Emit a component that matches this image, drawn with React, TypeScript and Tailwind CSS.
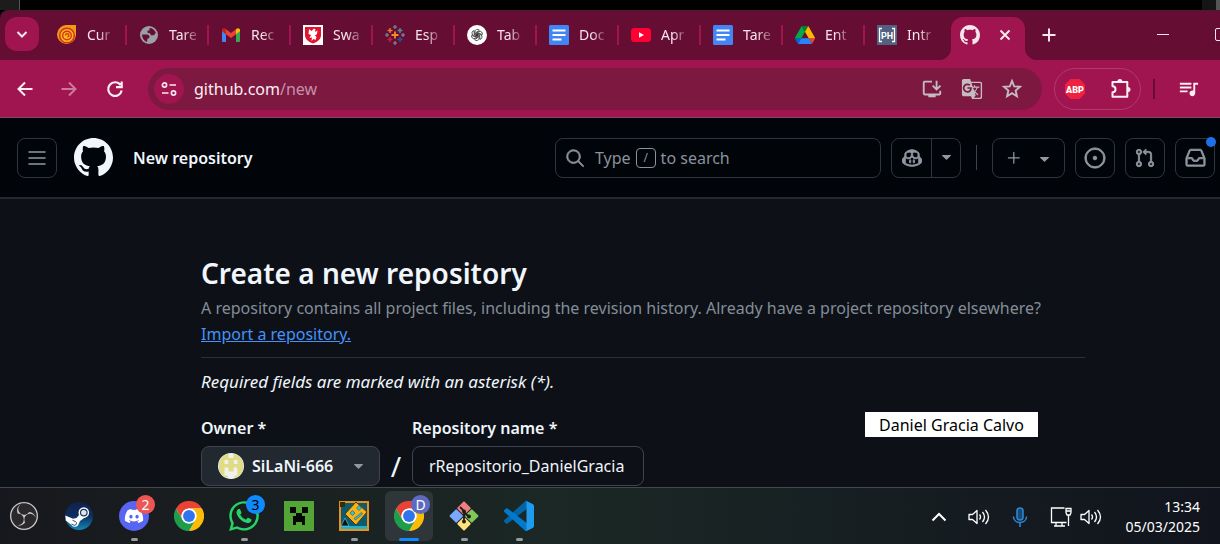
import { ReactNode } from "react";
import { FaDiscord, FaWhatsapp } from "react-icons/fa";
import {
  GoCopilot,
  GoGitPullRequest,
  GoInbox,
  GoIssueOpened,
  GoPlus,
  GoSearch,
  GoTriangleDown,
} from "react-icons/go";
import { MdGTranslate, MdOutlineInstallDesktop, MdQueueMusic } from "react-icons/md";
import { SiObsstudio } from "react-icons/si";

/* ---------- Favicons ---------- */

const GithubMark = ({ className }: { className: string }) => (
  <svg viewBox="0 0 16 16" className={className} fill="currentColor">
    <path d="M8 0c4.42 0 8 3.58 8 8a8.013 8.013 0 0 1-5.45 7.59c-.4.08-.55-.17-.55-.38 0-.27.01-1.13.01-2.2 0-.75-.25-1.23-.54-1.48 1.78-.2 3.65-.88 3.65-3.95 0-.88-.31-1.59-.82-2.15.08-.2.36-1.02-.08-2.12 0 0-.67-.22-2.2.82-.64-.18-1.32-.27-2-.27-.68 0-1.36.09-2 .27-1.53-1.03-2.2-.82-2.2-.82-.44 1.1-.16 1.92-.08 2.12-.51.56-.82 1.28-.82 2.15 0 3.06 1.86 3.75 3.64 3.95-.23.2-.44.55-.51 1.07-.46.21-1.61.55-2.33-.66-.15-.24-.6-.83-1.23-.82-.67.01-.27.38.01.53.34.19.73.9.82 1.13.16.45.68 1.31 2.69.94 0 .67.01 1.3.01 1.49 0 .21-.15.45-.55.38A7.995 7.995 0 0 1 0 8c0-4.42 3.58-8 8-8Z" />
  </svg>
);

const SpiralIcon = () => (
  <svg viewBox="0 0 20 20" className="size-5">
    <path d="M10 0h9v10a9.5 9.5 0 1 1-9-10z" fill="#f39a12" />
    <circle cx="10" cy="10.5" r="7.3" fill="#f9b917" stroke="#d6331f" strokeWidth="1.5" />
    <circle cx="10" cy="10.5" r="4.3" fill="none" stroke="#d6331f" strokeWidth="1.4" />
    <path d="M8.5 10.5a1.7 1.7 0 1 1 2 1.6" fill="none" stroke="#d6331f" strokeWidth="1.4" />
  </svg>
);

const GlobeIcon = () => (
  <svg viewBox="0 0 18 18" className="size-[18px]">
    <circle cx="9" cy="9" r="9" fill="#9aa0a6" />
    <path d="M2 8.500h5c2 0 2.500 1.500 2.500 2.500s-1 1.500-2 1.500L7 16C4 15 2 12 2 8.500z" fill="#650d32" />
    <path d="M9.500 2c3 0 5.500 2 6.300 5l-2 2.200h-3l-.8-2-2.500-.5V4.500h2z" fill="#650d32" />
  </svg>
);

const GmailIcon = () => (
  <svg viewBox="0 0 18 14" className="h-[14px] w-[18px]">
    <path d="M0 2.2V13a1 1 0 0 0 1 1h3V6z" fill="#4285f4" />
    <path d="M18 2.2V13a1 1 0 0 1-1 1h-3V6z" fill="#34a853" />
    <path d="M4 1.200l5 3.900 5-3.900v5L9 10 4 6.200z" fill="#ea4335" />
    <path d="M0 2.500C0 .2 2.300-.500 4 1.200v5L0 3.200z" fill="#c5221f" />
    <path d="M18 2.500C18 .2 15.700-.500 14 1.200v5l4-3z" fill="#fbbc04" />
  </svg>
);

const CrestIcon = () => (
  <svg viewBox="0 0 20 20" className="size-5">
    <path d="M0 0h20v20H0z" fill="#fff" />
    <path d="M2 2h16v8c0 4-3 6.500-8 8.500-5-2-8-4.500-8-8.500z" fill="#e2132c" />
    <path d="M6 4l2.500 2L11 3.500l1.500 1L12 7l2.500-1.500L14 9l-2 1.500 1.500 1.500-1 3-2-1-2 2 .5-3.500L6.500 13l1.500-3-2.500-1z" fill="#fff" />
  </svg>
);

const TableauIcon = () => (
  <svg viewBox="0 0 20 20" className="size-5" fill="none" strokeWidth="1.500">
    <path d="M10 6.500v7M6.500 10h7" stroke="#eb912c" strokeWidth="1.800" />
    <path d="M5 3v5M2.500 5.500h5" stroke="#e8762c" />
    <path d="M15 3v5M12.500 5.500h5" stroke="#59879b" />
    <path d="M5 12v5M2.500 14.500h5" stroke="#c72037" />
    <path d="M15 12v5M12.500 14.500h5" stroke="#2a5496" />
    <path d="M10 0v4M8 2h4M10 16v4M8 18h4M2 8v4M0 10h4M18 8v4M16 10h4" stroke="#7199a6" strokeWidth="1.100" />
  </svg>
);

const KnotIcon = () => (
  <svg viewBox="0 0 20 20" className="size-5">
    <circle cx="10" cy="10" r="10" fill="#fff" />
    <g fill="none" stroke="#333" strokeWidth=".9" transform="translate(1.500 1.500) scale(.85)">
      {[0, 60, 120, 180, 240, 300].map((angle) => (
        <path key={angle} transform={`rotate(${angle} 10 10)`} d="M7.600 10.800V6.200a2.900 2.900 0 0 1 5.200-1.700L9 6.900v2.700l2.600 1.500" />
      ))}
    </g>
  </svg>
);

const DocsIcon = () => (
  <svg viewBox="0 0 20 20" className="size-5">
    <rect width="20" height="20" rx="1.500" fill="#4285f4" />
    <path d="M3.500 5.500h13M3.500 10h13M3.500 14.500h9" stroke="#fff" strokeWidth="2" />
  </svg>
);

const YoutubeIcon = () => (
  <svg viewBox="0 0 20 14" className="h-[14px] w-5">
    <rect width="20" height="14" rx="3.500" fill="#ff0033" />
    <path d="M8 4.200v5.600L13 7z" fill="#fff" />
  </svg>
);

const DriveIcon = () => (
  <svg viewBox="0 0 87.3 78" className="h-[18px] w-5">
    <path d="m6.600 66.850 3.850 6.650c.8 1.400 1.950 2.500 3.300 3.300l13.750-23.800h-27.500c0 1.550.4 3.100 1.200 4.500z" fill="#0066da" />
    <path d="m43.650 25-13.750-23.800c-1.350.8-2.500 1.900-3.300 3.300l-25.400 44a9.060 9.060 0 0 0-1.200 4.500h27.500z" fill="#00ac47" />
    <path d="m73.550 76.800c1.350-.8 2.500-1.900 3.300-3.300l1.600-2.750 7.650-13.250c.8-1.400 1.200-2.950 1.200-4.500h-27.500l5.850 11.500z" fill="#ea4335" />
    <path d="m43.650 25 13.750-23.800c-1.350-.8-2.900-1.200-4.500-1.200h-18.500c-1.600 0-3.150.45-4.500 1.200z" fill="#00832d" />
    <path d="m59.800 53h-32.300l-13.750 23.800c1.350.8 2.900 1.200 4.500 1.200h50.800c1.600 0 3.150-.45 4.500-1.200z" fill="#2684fc" />
    <path d="m73.400 26.500-12.700-22c-.8-1.400-1.950-2.500-3.300-3.300l-13.750 23.800 16.150 28h27.450c0-1.550-.4-3.100-1.200-4.500z" fill="#ffba00" />
  </svg>
);

const PhIcon = () => (
  <svg viewBox="0 0 20 20" className="size-5">
    <path d="M0 0h20v20H0z" fill="#52617f" />
    <path d="M5 3.500H2.500v13H5M15 3.500h2.500v13H15" fill="none" stroke="#fff" strokeWidth="1.300" />
    <text x="10" y="13.500" textAnchor="middle" fontSize="9" fontWeight="700" fontFamily="Roboto, sans-serif" fill="#fff">PH</text>
  </svg>
);

/* ---------- Browser icons, drawn with heavier strokes ---------- */

const StrokeIcon = ({ d, className, width = 2 }: { d: string; className: string; width?: number }) => (
  <svg viewBox="0 0 20 20" className={className} fill="none" stroke="currentColor" strokeWidth={width}>
    <path d={d} />
  </svg>
);

const TuneIcon = () => (
  <svg viewBox="0 0 16 16" className="size-4" fill="none" stroke="#f7e6ee" strokeWidth="1.700">
    <circle cx="3.500" cy="4" r="2.100" />
    <path d="M8.500 4H15M1 12h6.500" />
    <circle cx="12.500" cy="12" r="2.100" />
  </svg>
);

const PuzzleIcon = () => (
  <svg viewBox="0 0 22 22" className="size-[22px]">
    <path
      d="M2.500 4h14.800v14.800H2.500v-4.500c4 0 4-6 0-6z"
      fill="none"
      stroke="currentColor"
      strokeWidth="2"
      strokeLinejoin="round"
    />
    <path d="M7.400 3.500a2.500 2.500 0 0 1 5 0zM18 8.900a2.500 2.500 0 0 1 0 5z" fill="currentColor" />
  </svg>
);

/* ---------- Taskbar icons ---------- */

const ChromeIcon = () => (
  <svg viewBox="0 0 48 48" className="size-[30px]">
    <circle cx="24" cy="24" r="23" fill="#fff" />
    <path d="M3.200 12A24 24 0 0 1 44.800 12H24a12 12 0 0 0-10.400 18z" fill="#ea4335" />
    <path d="M44.800 12A24 24 0 0 1 24 48l10.400-18A12 12 0 0 0 24 12z" fill="#fbbc05" />
    <path d="M24 48A24 24 0 0 1 3.200 12l10.400 18a12 12 0 0 0 20.800 0z" fill="#1e9e4a" />
    <circle cx="24" cy="24" r="12" fill="#fff" />
    <circle cx="24" cy="24" r="9.500" fill="#2f74ec" />
  </svg>
);

const SteamIcon = () => (
  <svg viewBox="0 0 28 28" className="size-7">
    <defs>
      <linearGradient id="steam" x1="0" y1="0" x2="0" y2="1">
        <stop offset="0" stopColor="#13204b" />
        <stop offset="0.500" stopColor="#0b2f5e" />
        <stop offset="1" stopColor="#1387b8" />
      </linearGradient>
    </defs>
    <circle cx="14" cy="14" r="14" fill="url(#steam)" />
    <path d="M.3 13.500 8 16.800l3.500-.8 4-4.800 5 3.800-5.500 4-1.500 3.500a4 4 0 0 1-7 .5L.8 18.500z" fill="#fff" />
    <circle cx="18.800" cy="10.600" r="5.300" fill="#fff" />
    <circle cx="18.800" cy="10.600" r="3.300" fill="#dfe5ec" stroke="#24395f" strokeWidth="1.200" />
    <path d="M7.500 18.300l2.300 1a2 2 0 1 1-1.600 3.500l-1.700-.7" fill="none" stroke="#24395f" strokeWidth=".9" />
  </svg>
);

const CreeperIcon = () => (
  <svg viewBox="0 0 30 30" className="size-[30px]">
    <path d="M0 0h30v30H0z" fill="#53a636" />
    <path d="M6 6h6v6H6zM18 6h6v6h-6zM12 12h6v3h3v9h-3v-3h-6v3H9v-9h3z" fill="#050805" />
  </svg>
);

const GeometryIcon = () => (
  <svg viewBox="0 0 30 30" className="size-[30px]">
    <path d="M0 0h30v30H0z" fill="#e8921a" />
    <path d="M2 2h26v26H2z" fill="#0c5a73" />
    <path d="M2 25h26v3H2z" fill="#1fb4c9" />
    <path d="M2 25l4-8 4 8z" fill="#06141c" stroke="#7fd6e6" strokeWidth=".6" />
    <path d="M1 1h5v5H1z" fill="#3a2a08" />
    <path d="M17 1l11 10-11 13L6 13z" fill="#f8b417" stroke="#5a3503" strokeWidth="1" />
    <path d="M11 12l2.500-2.500L16 12l-2.500 2.500zM17.500 7 20 4.500 22.500 7 20 9.500zM15 17.500l7.500-6 1 1.500-7 6z" fill="#27c7dc" stroke="#333" strokeWidth=".5" />
  </svg>
);

const GitIcon = () => (
  <svg viewBox="0 0 30 30" className="size-[30px]">
    <g transform="rotate(45 15 15)">
      <rect x="4.500" y="4.500" width="10" height="10" rx="1" fill="#f07f80" />
      <rect x="15.500" y="4.500" width="10" height="10" rx="1" fill="#80c75a" />
      <rect x="4.500" y="15.500" width="10" height="10" rx="1" fill="#7aa9ff" />
      <rect x="15.500" y="15.500" width="10" height="10" rx="1" fill="#ffe27a" />
    </g>
    <path d="M11 6l4 4v11M15 11l5 5" stroke="#201d1c" strokeWidth="1.800" fill="none" />
    <circle cx="15" cy="10.500" r="2" fill="#201d1c" />
    <circle cx="20" cy="15.500" r="2" fill="#201d1c" />
    <circle cx="15" cy="20.500" r="2" fill="#201d1c" />
  </svg>
);

const CodeIcon = () => (
  <svg viewBox="0 0 100 100" className="size-[30px]">
    <path d="M96.500 10.800 75.900.9a6.200 6.200 0 0 0-7.100 1.200L1.300 63.600a4.200 4.200 0 0 0 0 6.200l5.500 5a4.200 4.200 0 0 0 5.300.2L93.400 13.400c2.700-2.100 6.600-.1 6.600 3.300v-.2a6.300 6.300 0 0 0-3.500-5.700z" fill="#0065a9" />
    <path d="m96.500 89.200-20.600 9.900a6.200 6.200 0 0 1-7.100-1.200L1.300 36.400a4.200 4.200 0 0 1 0-6.200l5.500-5a4.200 4.200 0 0 1 5.300-.2l81.300 61.600c2.700 2.100 6.600.1 6.600-3.300v.2a6.300 6.300 0 0 1-3.500 5.700z" fill="#007acc" />
    <path d="M75.900 99.100a6.200 6.200 0 0 1-7.100-1.200c2.300 2.300 6.200.7 6.200-2.600V4.700c0-3.300-3.900-4.900-6.200-2.600A6.200 6.200 0 0 1 75.900.9l20.600 9.900a6.300 6.300 0 0 1 3.500 5.700v67a6.300 6.300 0 0 1-3.500 5.700z" fill="#1f9cf0" />
  </svg>
);

const DiscordIcon = () => (
  <span className="flex size-[30px] items-center justify-center rounded-full bg-[#5865f2] text-white">
    <FaDiscord size={20} />
  </span>
);

const ObsIcon = () => (
  <span className="flex size-7 items-center justify-center rounded-full bg-[#2a282b] text-[#c9c8ca]">
    <SiObsstudio size={28} />
  </span>
);

const SpeakerIcon = () => (
  <svg viewBox="0 0 22 20" className="h-5 w-[22px]" fill="none" stroke="#fff" strokeWidth="1.300">
    <path d="M1 7.500h3.500L9 3.500v13L4.500 12.500H1z" strokeLinejoin="round" />
    <path d="M11.500 7.500q2 2.500 0 5M14.500 5q4 5 0 10M17.500 3q6 7 0 14" />
  </svg>
);

const MicIcon = () => (
  <svg viewBox="0 0 16 20" className="h-5 w-4" fill="none" stroke="#2e86d1" strokeWidth="1.600">
    <rect x="5" y="1" width="6" height="12" rx="3" fill="#174a78" />
    <path d="M1.500 9.500c0 8 13 8 13 0M8 15.500V20" />
  </svg>
);

const NetworkIcon = () => (
  <svg viewBox="0 0 22 20" className="h-5 w-[22px]" fill="none" stroke="#fff" strokeWidth="1.300">
    <path d="M14.500 1H1.500v14.500h15M6 15.500v3M12 15.500v3M4 19h11M18.500 8v11" />
    <path d="M16 1.500h5v4L20 8h-3l-1-2.500zM16 4h5" />
  </svg>
);

/* ---------- Data ---------- */

const tabs: { label: string; icon: ReactNode }[] = [
  { label: "Cur", icon: <SpiralIcon /> },
  { label: "Tare", icon: <GlobeIcon /> },
  { label: "Rec", icon: <GmailIcon /> },
  { label: "Swa", icon: <CrestIcon /> },
  { label: "Esp", icon: <TableauIcon /> },
  { label: "Tab", icon: <KnotIcon /> },
  { label: "Doc", icon: <DocsIcon /> },
  { label: "Apr", icon: <YoutubeIcon /> },
  { label: "Tare", icon: <DocsIcon /> },
  { label: "Ent", icon: <DriveIcon /> },
  { label: "Intr", icon: <PhIcon /> },
];

type TaskItem = { name: string; icon: ReactNode; badge?: string; badgeClass?: string; running?: boolean; active?: boolean };

const tasks: TaskItem[] = [
  { name: "OBS Studio", icon: <ObsIcon /> },
  { name: "Steam", icon: <SteamIcon /> },
  { name: "Discord", icon: <DiscordIcon />, badge: "2", badgeClass: "bg-[#ee5555] text-white", running: true },
  { name: "Chrome", icon: <ChromeIcon /> },
  { name: "WhatsApp", icon: <FaWhatsapp size={34} color="#25d366" />, badge: "3", badgeClass: "bg-[#0d8bff] text-black", running: true },
  { name: "Minecraft", icon: <CreeperIcon /> },
  { name: "Geometry Dash", icon: <GeometryIcon />, running: true },
  { name: "Chrome, perfil D", icon: <ChromeIcon />, badge: "D", badgeClass: "bg-[#5c6bc0] text-white", active: true },
  { name: "Git", icon: <GitIcon />, running: true },
  { name: "Visual Studio Code", icon: <CodeIcon />, running: true },
];

/* ---------- Sections ---------- */

function TabStrip() {
  return (
    <div className="flex h-[50px] items-end overflow-hidden rounded-tl-lg border-t border-[#4b1a30] bg-[#650d32] text-[#f7e6ee]">
      <button aria-label="Buscar pestañas" className="mb-[9px] ml-[5px] mr-[6px] flex size-[34px] shrink-0 items-center justify-center rounded-xl bg-[#a01450]">
        <StrokeIcon d="M5.500 8l4.500 4.500L14.500 8" className="size-5" />
      </button>
      {tabs.map((tab, i) => (
        <button key={i} className="flex h-[50px] w-[82px] shrink-0 items-center text-left text-sm">
          <span className="ml-3 flex w-5 justify-center">{tab.icon}</span>
          <span className="ml-[10px] whitespace-nowrap [mask-image:linear-gradient(to_right,black_50%,#0004)]">{tab.label}</span>
          {i < tabs.length - 1 && <span className="ml-auto h-5 w-[2px] bg-[#a01450]" />}
        </button>
      ))}
      <svg viewBox="0 0 12 12" className="-ml-2 size-3 shrink-0" fill="#a01450">
        <path d="M12 0v12H0A12 12 0 0 0 12 0z" />
      </svg>
      <div className="flex h-[43px] w-[74px] shrink-0 items-center justify-between rounded-t-xl bg-[#a01450] px-[9px] pb-2">
        <GithubMark className="size-5" />
        <button aria-label="Cerrar pestaña" className="mr-[1px]">
          <StrokeIcon d="M5.500 5.500l9 9M14.500 5.500l-9 9" className="size-5" />
        </button>
      </div>
      <svg viewBox="0 0 12 12" className="size-3 shrink-0" fill="#a01450">
        <path d="M0 0v12h12A12 12 0 0 1 0 0z" />
      </svg>
      <button aria-label="Nueva pestaña" className="mb-[15px] ml-[2px]">
        <StrokeIcon d="M10 3.500v13M3.500 10h13" className="size-5" />
      </button>
      <button aria-label="Minimizar" className="mb-[25px] ml-auto h-px w-3 shrink-0 bg-[#f7e6ee]" />
      <button aria-label="Maximizar" className="-mr-2 mb-[19px] ml-[46px] size-[13px] shrink-0 rounded-[2px] border border-[#f7e6ee]" />
    </div>
  );
}

function Toolbar() {
  return (
    <div className="flex h-[58px] items-center border-b border-[#7d4a61] bg-[#a01450] pl-[15px] pr-5 text-[#fbeef3]">
      <button aria-label="Atrás"><StrokeIcon d="M17.500 10h-14M10 3.500 3.500 10l6.500 6.500" className="size-5" /></button>
      <button aria-label="Adelante" className="ml-6 text-[#cb7a9b]"><StrokeIcon d="M2.500 10h14M10 3.500l6.500 6.500-6.500 6.500" className="size-5" /></button>
      <button aria-label="Recargar" className="ml-[26px]"><StrokeIcon d="M15.500 6A6.800 6.800 0 1 0 16.700 11.500M16.700 2.500v5.700H11" className="size-5" width={2.2} /></button>
      <div className="ml-[23px] flex h-[42px] flex-1 items-center rounded-full bg-[#7d1840] pl-[6px] pr-[19px]">
        <button aria-label="Información del sitio" className="flex size-[30px] items-center justify-center rounded-full bg-[#a01450]">
          <TuneIcon />
        </button>
        <span className="ml-[10px] text-base">
          github.com<span className="text-[#c590a8]">/new</span>
        </span>
        <span className="ml-auto flex items-center gap-[18px] text-[#c4bcc0]">
          <button aria-label="Instalar"><MdOutlineInstallDesktop size={22} /></button>
          <button aria-label="Traducir"><MdGTranslate size={22} /></button>
          <button aria-label="Favorito"><StrokeIcon d="M10 2.700l2 4.900 5.300.4-4 3.400 1.200 5.200L10 13.800l-4.500 2.800 1.200-5.200-4-3.400 5.300-.4z" className="size-[22px]" width={1.7} /></button>
        </span>
      </div>
      <div className="ml-3 flex h-[42px] w-[87px] items-center justify-between rounded-full border border-[#b03a6c] pl-[9px] pr-2">
        <svg viewBox="0 0 22 22" className="size-[22px]" role="img" aria-label="ABP">
          <path d="M6.500 1h9L21 6.500v9L15.500 21h-9L1 15.500v-9z" fill="#f0203f" />
          <text x="11" y="14.500" textAnchor="middle" fontSize="9" fontWeight="900" fontFamily="Roboto, sans-serif" fill="#fff">ABP</text>
        </svg>
        <button aria-label="Extensiones"><PuzzleIcon /></button>
      </div>
      <span className="ml-3 mr-[22px] h-5 w-[2px] bg-[#650d32]" />
      <button aria-label="Controles multimedia"><MdQueueMusic size={23} /></button>
    </div>
  );
}

const box = "flex h-10 items-center justify-center rounded-lg border border-[#2f353d] text-[#9198a1]";

function GithubHeader() {
  return (
    <header className="flex h-[81px] items-center border-b-2 border-[#25292f] bg-[#010409] pl-[17px] pr-[5px]">
      <button aria-label="Menú" className={`${box} w-10`}>
        <svg viewBox="0 0 20 20" className="size-5" stroke="currentColor" strokeWidth="1.500" strokeLinecap="round">
          <path d="M2 4h16M2 10h16M2 16h16" />
        </svg>
      </button>
      <a href="#inicio" aria-label="GitHub" className="ml-[17px] text-[#f0f6fc]"><GithubMark className="size-[39px]" /></a>
      <a href="#nuevo" className="ml-5 text-base font-semibold text-[#f0f6fc]">New repository</a>
      <button className="ml-auto flex h-10 w-[326px] items-center rounded-lg border border-[#2f353d] px-[9px] text-base text-[#8b929b]">
        <GoSearch size={20} stroke="currentColor" strokeWidth={1} />
        <span className="ml-[10px]">Type</span>
        <span className="mx-[5px] flex size-5 items-center justify-center rounded border border-[#8b929b] text-xs">/</span>
        <span>to search</span>
      </button>
      <div className="ml-[10px] flex h-10 w-[70px] rounded-lg border border-[#2f353d] text-[#9198a1]">
        <button aria-label="Copilot" className="flex w-10 items-center justify-center border-r border-[#2f353d]"><GoCopilot size={20} stroke="currentColor" strokeWidth={1} /></button>
        <button aria-label="Opciones de Copilot" className="flex flex-1 items-center justify-center"><GoTriangleDown size={17} /></button>
      </div>
      <span className="mx-[15px] h-[25px] w-px bg-[#3d444d]" />
      <button aria-label="Crear" className={`${box} w-[73px] gap-3`}><GoPlus size={20} /><GoTriangleDown size={17} className="mt-1" /></button>
      <button aria-label="Incidencias" className={`${box} ml-[10px] w-10`}><GoIssueOpened size={22} stroke="currentColor" strokeWidth={1} /></button>
      <button aria-label="Pull requests" className={`${box} ml-[10px] w-10`}><GoGitPullRequest size={20} stroke="currentColor" strokeWidth={1} /></button>
      <button aria-label="Notificaciones" className={`${box} relative ml-[10px] w-10`}>
        <GoInbox size={21} stroke="currentColor" strokeWidth={1} />
        <span className="absolute -right-[2px] -top-[2px] size-[10px] rounded-full bg-[#1f6feb]" />
      </button>
    </header>
  );
}

function RepositoryForm() {
  return (
    <main className="relative flex-1 overflow-hidden bg-[#0d1117] pl-[201px] pr-[135px] pt-[53px] text-base text-[#f0f6fc]">
      <h1 className="text-[28px] font-semibold leading-[43px]">Create a new repository</h1>
      <div className="border-b border-[#2b3139] pb-[10px] leading-[26px] text-[#848d97]">
        <p className="whitespace-nowrap">
          A repository contains all project files, including the revision history. Already have a project repository elsewhere?
        </p>
        <a href="#importar" className="text-[#4493f8] underline">Import a repository.</a>
      </div>
      <p className="mt-[11px] text-[17px] italic leading-[26px]">Required fields are marked with an asterisk (*).</p>
      <form className="mt-5 flex items-end">
        <div className="w-[179px]">
          <label htmlFor="owner" className="block font-semibold leading-[26px]">Owner *</label>
          <button id="owner" type="button" className="mt-[5px] flex h-10 w-full items-center rounded-lg border border-[#3d444d] bg-[#212830] pl-4 pr-3 font-semibold">
            <svg viewBox="0 0 26 26" className="size-[26px]">
              <circle cx="13" cy="13" r="13" fill="#f0f0f0" />
              <path d="M5 3.200A12.500 12.500 0 0 1 10.500.8V5h5V.8A12.500 12.500 0 0 1 25 10v7a12.500 12.500 0 0 1-8.500 8v-2.500h2.800v-8h-3.700v4h-5v-4H6.500v8h3.200V25A12.500 12.500 0 0 1 1 17v-7a12.500 12.500 0 0 1 4-6.800zM6.500 7v4h3.700V7zM15.800 7v4h3.700V7z" fill="#dfdc85" fillRule="evenodd" />
            </svg>
            <span className="ml-2">SiLaNi-666</span>
            <GoTriangleDown size={17} className="ml-auto text-[#9198a1]" />
          </button>
        </div>
        <span className="flex h-10 w-8 items-center justify-center text-[28px]">/</span>
        <div className="w-[232px]">
          <label htmlFor="repo" className="block font-semibold leading-[26px]">Repository name *</label>
          <input id="repo" defaultValue="rRepositorio_DanielGracia" className="mt-[5px] h-10 w-full rounded-lg border border-[#3d444d] bg-transparent px-4" />
        </div>
      </form>
      <div className="absolute left-[865px] top-[213px] flex h-[25px] w-[173px] items-center justify-center bg-white text-black">
        Daniel Gracia Calvo
      </div>
    </main>
  );
}

function Taskbar() {
  return (
    <footer className="flex h-[57px] items-center border-t border-[#45484b] bg-linear-to-r from-[#17181d] via-[#1b2825] via-45% to-[#11141d] pr-5 text-white">
      <div className="flex gap-[7px]">
        {tasks.map((task) => (
          <button
            key={task.name}
            aria-label={task.name}
            className={`relative flex h-[50px] w-12 items-center justify-center rounded-md ${task.active ? "bg-[#2e3639]" : ""}`}
          >
            {task.icon}
            {task.badge && (
              <span className={`absolute right-[3px] top-1 flex size-[19px] items-center justify-center rounded-full text-sm leading-none ${task.badgeClass}`}>
                {task.badge}
              </span>
            )}
            {task.running && <span className="absolute bottom-0 h-[3px] w-[7px] rounded-full bg-[#9a9b9d]" />}
            {task.active && <span className="absolute bottom-0 h-[3px] w-5 rounded-full bg-[#0d8bff]" />}
          </button>
        ))}
      </div>
      <div className="ml-auto flex items-center pt-[2px]">
        <svg viewBox="0 0 16 10" className="h-[10px] w-4" fill="none" stroke="#fff" strokeWidth="2">
          <path d="M1.500 8.500 8 2l6.500 6.500" />
        </svg>
        <span className="ml-[21px]"><SpeakerIcon /></span>
        <span className="ml-[22px]"><MicIcon /></span>
        <span className="ml-[22px]"><NetworkIcon /></span>
        <span className="ml-2"><SpeakerIcon /></span>
        <div className="ml-6 text-right text-sm leading-5">
          <div>13:34</div>
          <div>05/03/2025</div>
        </div>
      </div>
    </footer>
  );
}

export default function App() {
  return (
    <div className="flex min-h-screen flex-col overflow-hidden bg-black font-['Noto_Sans','Open_Sans',sans-serif]">
      <div className="flex h-[10px] items-stretch justify-between bg-black">
        <span className="w-5 border-r border-[#555] bg-[#1c1c1c]" />
        <span className="w-[18px] border-r-4 border-[#555] bg-[#151515]" />
      </div>
      <TabStrip />
      <Toolbar />
      <GithubHeader />
      <RepositoryForm />
      <Taskbar />
    </div>
  );
}
